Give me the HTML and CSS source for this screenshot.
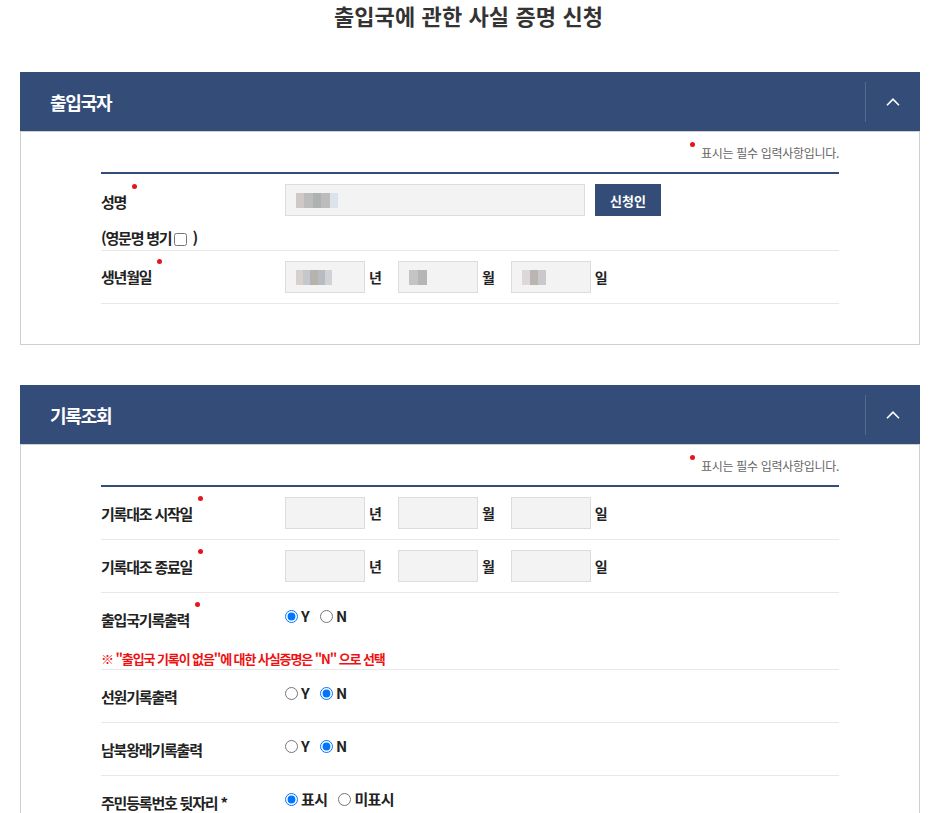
FILE: index.html
```html
<!DOCTYPE html>
<html lang="ko">
<head>
<meta charset="utf-8">
<title>출입국에 관한 사실 증명 신청</title>
<link rel="stylesheet" href="styles.css">
</head>
<body>
<h1 class="page-title">출입국에 관한 사실 증명 신청</h1>

<section class="section">
  <div class="section-head">
    <h2 class="head-title">출입국자</h2>
    <div class="toggle"><svg width="14" height="8" viewBox="0 0 14 8"><polyline points="1,7.2 7,1.2 13,7.2" fill="none" stroke="#fff" stroke-width="1.6"/></svg></div>
  </div>
  <div class="section-body">
    <div class="note"><span class="note-dot"></span>표시는 필수 입력사항입니다.</div>
    <div class="name-row">
      <div class="name-main">
        <div class="row-label name-label"><span class="req">성명</span></div>
        <div class="row-ctrl">
          <div class="input wide"><span class="mosaic m-name"></span></div>
          <button class="btn">신청인</button>
        </div>
      </div>
      <div class="eng">(영문명 병기<input type="checkbox" class="chk">)</div>
    </div>
    <div class="row">
      <div class="row-label birth-label"><span class="req">생년월일</span></div>
      <div class="row-ctrl">
        <div class="input"><span class="mosaic m-y"></span></div><span class="unit">년</span>
        <div class="input"><span class="mosaic m-m"></span></div><span class="unit">월</span>
        <div class="input"><span class="mosaic m-d"></span></div><span class="unit">일</span>
      </div>
    </div>
  </div>
</section>

<section class="section">
  <div class="section-head">
    <h2 class="head-title">기록조회</h2>
    <div class="toggle"><svg width="14" height="8" viewBox="0 0 14 8"><polyline points="1,7.2 7,1.2 13,7.2" fill="none" stroke="#fff" stroke-width="1.6"/></svg></div>
  </div>
  <div class="section-body">
    <div class="note"><span class="note-dot"></span>표시는 필수 입력사항입니다.</div>
    <div class="row">
      <div class="row-label"><span class="req">기록대조 시작일</span></div>
      <div class="row-ctrl">
        <div class="input"></div><span class="unit">년</span>
        <div class="input"></div><span class="unit">월</span>
        <div class="input"></div><span class="unit">일</span>
      </div>
    </div>
    <div class="row">
      <div class="row-label"><span class="req">기록대조 종료일</span></div>
      <div class="row-ctrl">
        <div class="input"></div><span class="unit">년</span>
        <div class="input"></div><span class="unit">월</span>
        <div class="input"></div><span class="unit">일</span>
      </div>
    </div>
    <div class="row radio-row has-note">
      <div class="row-label"><span class="req">출입국기록출력</span></div>
      <div class="row-ctrl">
        <label class="opt"><input type="radio" name="r1" checked>Y</label>
        <label class="opt"><input type="radio" name="r1">N</label>
      </div>
      <p class="warn">※ "출입국 기록이 없음"에 대한 사실증명은 "N" 으로 선택</p>
    </div>
    <div class="row radio-row">
      <div class="row-label">선원기록출력</div>
      <div class="row-ctrl">
        <label class="opt"><input type="radio" name="r2">Y</label>
        <label class="opt"><input type="radio" name="r2" checked>N</label>
      </div>
    </div>
    <div class="row radio-row">
      <div class="row-label">남북왕래기록출력</div>
      <div class="row-ctrl">
        <label class="opt"><input type="radio" name="r3">Y</label>
        <label class="opt"><input type="radio" name="r3" checked>N</label>
      </div>
    </div>
    <div class="row radio-row">
      <div class="row-label">주민등록번호 뒷자리 *</div>
      <div class="row-ctrl">
        <label class="opt"><input type="radio" name="r4" checked>표시</label>
        <label class="opt"><input type="radio" name="r4">미표시</label>
      </div>
    </div>
  </div>
</section>
</body>
</html>
```

FILE: styles.css
```css
* { box-sizing: border-box; }

body {
  margin: 0;
  background: #fff;
  color: #222;
  font-family: "Noto Sans CJK KR", "Noto Sans", sans-serif;
}

.page-title {
  margin: 0 0 42px;
  height: 30px;
  line-height: 30px;
  text-align: center;
  font-size: 22px;
  font-weight: 700;
  letter-spacing: 0.1px;
  color: #333;
}

.section {
  margin: 0 17px 40px 20px;
}

.section-head {
  height: 59px;
  background: #344d78;
  color: #fff;
  display: flex;
  align-items: center;
  justify-content: space-between;
  padding-left: 30px;
}

.head-title {
  margin: 0;
  font-size: 18px;
  font-weight: 700;
  letter-spacing: -1.2px;
  line-height: 24px;
}

.toggle {
  width: 55px;
  height: 40px;
  border-left: 1px solid #55698f;
  display: flex;
  align-items: center;
  justify-content: center;
}

.section-body {
  border: 1px solid #cfcfcf;
  padding: 0 80px 40px;
}

.note {
  height: 42px;
  border-bottom: 2px solid #344d78;
  display: flex;
  justify-content: flex-end;
  align-items: center;
  font-size: 12px;
  letter-spacing: -0.3px;
  color: #666;
}

.note-dot {
  width: 5px;
  height: 5px;
  border-radius: 50%;
  background: #e8141b;
  margin: 0 6px 15px 0;
}

.row {
  display: flex;
  align-items: flex-start;
  min-height: 53px;
  border-bottom: 1px solid #e8e8e8;
}

.row-label {
  width: 184px;
  flex: none;
  margin-top: 17px;
  line-height: 20px;
  font-size: 15px;
  font-weight: 700;
  letter-spacing: -1.2px;
  color: #222;
}

.birth-label { margin-top: 16px; }

.req { position: relative; }

.req::after {
  content: "";
  position: absolute;
  width: 5px;
  height: 5px;
  border-radius: 50%;
  background: #e8141b;
  right: -11px;
  top: -7px;
}

.row-ctrl {
  margin-top: 10px;
  display: flex;
  align-items: center;
}

.input {
  width: 80px;
  height: 32px;
  background: #f3f3f3;
  border: 1px solid #dcdcdc;
  display: flex;
  align-items: center;
  padding-left: 10px;
}

.input.wide { width: 300px; }

.unit {
  margin: 0 16px 0 4px;
  font-size: 14px;
  font-weight: 700;
  line-height: 20px;
}

.unit:last-child { margin-right: 0; }

.mosaic {
  display: block;
  height: 15px;
  filter: blur(0.6px);
}

.m-name {
  width: 42px;
  background:
    linear-gradient(90deg, #cfc8c6 0 20%, #bdbdbd 20% 40%, #aeb2b0 40% 60%, #bcbcbc 60% 80%, #dde3ea 80%);
}

.m-y {
  width: 36px;
  background:
    linear-gradient(90deg, #d8d0ca 0 20%, #c4c8cc 20% 40%, #b8b2ad 40% 60%, #b8bcc0 60% 80%, #cfd2d6 80%);
}

.m-m {
  width: 18px;
  background: linear-gradient(90deg, #c4c4c4 0 50%, #b5b5b5 50%);
}

.m-d {
  width: 24px;
  background: linear-gradient(90deg, #dcd8d8 0 33%, #bbb5b2 33% 66%, #c9c9cc 66%);
}

.btn {
  margin-left: 10px;
  width: 66px;
  height: 32px;
  border: 0;
  background: #344d78;
  color: #fff;
  font-family: inherit;
  font-size: 13px;
  font-weight: 700;
  letter-spacing: 0;
  padding: 0;
}

.name-row {
  border-bottom: 1px solid #e8e8e8;
  padding-bottom: 2px;
}

.name-main {
  display: flex;
  align-items: flex-start;
}

.name-main .row-ctrl { margin-top: 10px; }
.name-main .row-label { margin-top: 18px; }

.eng {
  margin-top: 12px;
  line-height: 20px;
  font-size: 15px;
  font-weight: 700;
  letter-spacing: -1.2px;
  display: flex;
  align-items: center;
}

.chk {
  width: 13px;
  height: 13px;
  margin: 2px 5px 0 3px;
}

.radio-row .row-ctrl {
  margin-top: 14px;
  height: 18px;
}

.opt {
  display: inline-flex;
  align-items: center;
  font-size: 15px;
  font-weight: 700;
  line-height: 18px;
  letter-spacing: -0.6px;
  margin-right: 11px;
}

.opt input {
  width: 13px;
  height: 13px;
  margin: 0 3px 0 0;
}

.has-note { flex-wrap: wrap; }

.warn {
  width: 100%;
  margin: 19px 0 0;
  line-height: 20px;
  font-size: 13px;
  font-weight: 700;
  letter-spacing: -1.1px;
  color: #ee1111;
}
```
